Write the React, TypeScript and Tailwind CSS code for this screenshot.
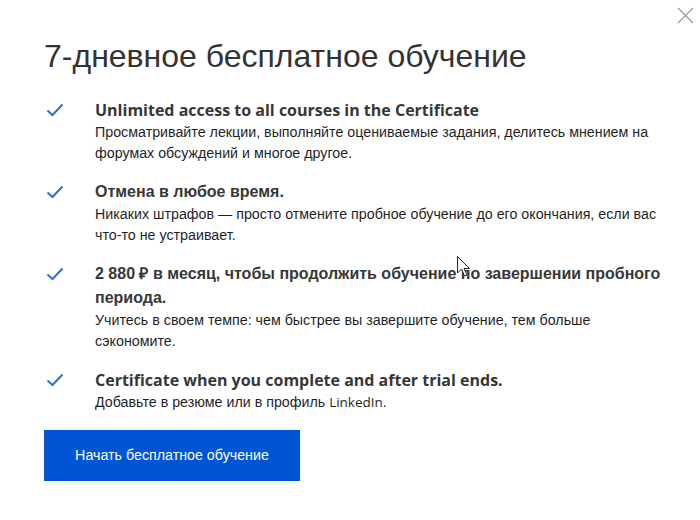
import React from 'react';

const items = [
  {
    title: 'Unlimited access to all courses in the Certificate',
    latin: true,
    text: 'Просматривайте лекции, выполняйте оцениваемые задания, делитесь мнением на форумах обсуждений и многое другое.',
  },
  {
    title: 'Отмена в любое время.',
    latin: false,
    text: 'Никаких штрафов — просто отмените пробное обучение до его окончания, если вас что-то не устраивает.',
  },
  {
    title: '2 880 ₽ в месяц, чтобы продолжить обучение по завершении пробного периода.',
    latin: false,
    text: 'Учитесь в своем темпе: чем быстрее вы завершите обучение, тем больше сэкономите.',
  },
  {
    title: 'Certificate when you complete and after trial ends.',
    latin: true,
    text: 'Добавьте в резюме или в профиль LinkedIn.',
  },
];

function Check() {
  return (
    <svg width="18" height="14" viewBox="0 0 18 14" fill="none">
      <path d="M1.5 7.5 L6.5 12 L16.5 1.5" stroke="#2a73cc" strokeWidth="2" strokeLinejoin="miter" />
    </svg>
  );
}

export default function App() {
  return (
    <div className="relative w-[700px] h-[520px] bg-white overflow-hidden font-['Liberation_Sans',Arial,sans-serif]">
      <button className="absolute top-[7px] right-[6px] w-[17px] h-[17px]">
        <svg width="17" height="17" viewBox="0 0 17 17">
          <path d="M1 1 L16 16 M16 1 L1 16" stroke="#9a9a9a" strokeWidth="1.3" />
        </svg>
      </button>

      <div className="pl-[44px] pr-[37px] pt-[36px]">
        <h1 className="font-['Liberation_Sans',Arial,sans-serif] font-normal text-[32px] leading-[40px] text-[#333]">
          7-дневное бесплатное обучение
        </h1>

        <ul className="mt-[22px] flex flex-col gap-[16px]">
          {items.map((it) => (
            <li key={it.title} className="flex">
              <div className="w-[51px] shrink-0 pt-[5px] pl-[2px]">
                <Check />
              </div>
              <div className="flex-1">
                <div
                  className={`${it.latin ? "font-['Open_Sans',sans-serif]" : "font-['Liberation_Sans',Arial,sans-serif]"} font-bold text-[16px] leading-[24px] text-[#373737]`}
                >
                  {it.title}
                </div>
                <p className="text-[14.25px] leading-[21px] text-[#1f1f1f]">
                  {it.text.includes('LinkedIn') ? (
                    <>
                      Добавьте в резюме или в профиль{' '}
                      <span className="font-['Open_Sans',sans-serif] text-[13.5px]">LinkedIn</span>.
                    </>
                  ) : (
                    it.text
                  )}
                </p>
              </div>
            </li>
          ))}
        </ul>

        <button className="mt-[17px] w-[256px] h-[51px] bg-[#0056d2] text-white text-[14.25px] font-['Liberation_Sans',Arial,sans-serif]">
          Начать бесплатное обучение
        </button>
      </div>

      <svg className="absolute left-[457px] top-[256px]" width="14" height="22" viewBox="0 0 14 22">
        <path d="M0.5 0.5 L0.5 17 L4.5 13 L7.5 20 L10 19 L7 12.5 L12.5 12.5 Z" fill="white" stroke="#222" strokeWidth="1" />
      </svg>
    </div>
  );
}
